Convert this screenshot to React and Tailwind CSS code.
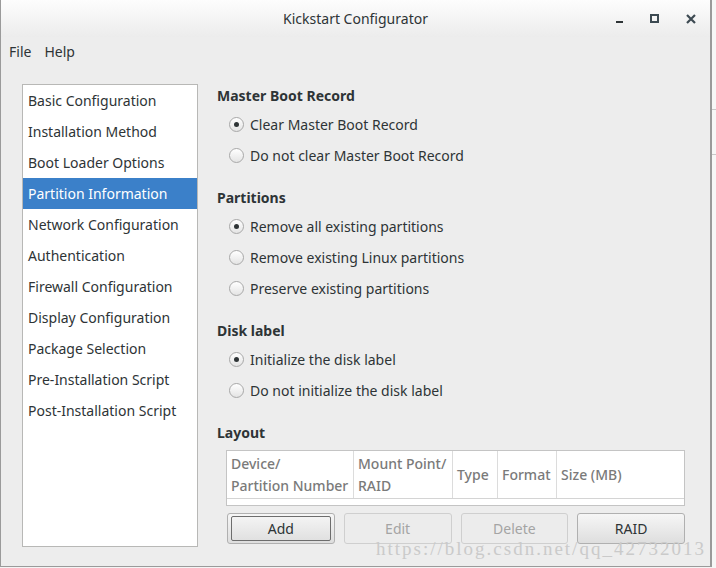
import React from 'react';

const sections = [
  'Basic Configuration',
  'Installation Method',
  'Boot Loader Options',
  'Partition Information',
  'Network Configuration',
  'Authentication',
  'Firewall Configuration',
  'Display Configuration',
  'Package Selection',
  'Pre-Installation Script',
  'Post-Installation Script',
];

const Radio = ({ checked, label }) => (
  <div className="flex h-[31px] items-center pl-[12px]">
    <span className="flex h-[15px] w-[15px] items-center justify-center rounded-full border border-[#a8a8a8] bg-gradient-to-b from-[#ffffff] to-[#e4e4e4]">
      {checked && <span className="h-[5px] w-[5px] rounded-full bg-[#2e3436]" />}
    </span>
    <span className="ml-[6px] text-[#2e3436]">{label}</span>
  </div>
);

const Heading = ({ children, className = '' }) => (
  <div className={`flex h-[24px] items-center font-bold text-[#2e3436] ${className}`}>{children}</div>
);

const Button = ({ children, disabled, focused }) => (
  <div
    className={`flex h-[31px] items-center justify-center rounded-[3px] border ${
      disabled
        ? 'border-[#cfcfcf] bg-[#ececec] text-[#a4a4a4]'
        : 'border-[#b0b0b0] bg-gradient-to-b from-[#f6f6f6] to-[#dedede] text-[#2e3436]'
    }`}
  >
    <div
      className={`flex h-[25px] w-[calc(100%-6px)] items-center justify-center rounded-[2px] ${
        focused ? 'border border-[#6d6d6d]' : ''
      }`}
    >
      {children}
    </div>
  </div>
);

export default function App() {
  return (
    <div className="flex h-[568px] w-[716px] overflow-hidden bg-[#f4f4f4] text-[14px]" style={{ fontFamily: '"Noto Sans", sans-serif' }}>
      <div className="relative flex h-[567px] w-[712px] flex-col border-l border-r-2 border-b border-[#9a9a9a] bg-[#ededed]">
        {/* title bar */}
        <div className="relative flex h-[37px] items-center justify-center bg-gradient-to-b from-[#fdfdfd] to-[#ececec]">
          <span className="text-[14px] text-[#2e3436]">Kickstart Configurator</span>
          <div className="absolute right-[14px] top-0 flex h-full items-center gap-[27px]">
            <span className="mt-[7px] h-[2px] w-[7px] bg-[#2e3436]" />
            <span className="h-[9px] w-[9px] border-2 border-[#3d4a52]" />
            <svg width="10" height="10" viewBox="0 0 10 10">
              <path d="M1 1 L9 9 M9 1 L1 9" stroke="#3d4a52" strokeWidth="2.2" />
            </svg>
          </div>
        </div>

        {/* menu bar */}
        <div className="flex h-[29px] items-center gap-[13px] pl-[8px] text-[14px] text-[#2e3436]">
          <span>File</span>
          <span>Help</span>
        </div>

        <div className="flex pl-[21px] pt-[17px]">
          {/* sidebar */}
          <div className="mt-[1px] h-[463px] w-[176px] border border-[#b8b8b6] bg-white">
            {sections.map((s) => (
              <div
                key={s}
                className={`flex h-[31px] items-center pl-[5px] ${
                  s === 'Partition Information' ? 'bg-[#3b80c9] text-white' : 'text-[#2e3436]'
                }`}
              >
                {s}
              </div>
            ))}
          </div>

          {/* right pane */}
          <div className="ml-[19px] flex w-[468px] flex-col">
            <Heading>Master Boot Record</Heading>
            <div className="mt-[2px]">
              <Radio checked label="Clear Master Boot Record" />
              <Radio label="Do not clear Master Boot Record" />
            </div>

            <Heading className="mt-[14px]">Partitions</Heading>
            <div className="mt-[2px]">
              <Radio checked label="Remove all existing partitions" />
              <Radio label="Remove existing Linux partitions" />
              <Radio label="Preserve existing partitions" />
            </div>

            <Heading className="mt-[14px]">Disk label</Heading>
            <div className="mt-[2px]">
              <Radio checked label="Initialize the disk label" />
              <Radio label="Do not initialize the disk label" />
            </div>

            <Heading className="mt-[14px]">Layout</Heading>

            <div className="ml-[9px] mt-[6px] w-[459px]">
              <div className="h-[56px] border border-[#c4c4c4] bg-white">
                <div className="flex h-[48px] border-b border-[#d4d4d4] font-medium leading-[22px] text-[#7a7a7a]">
                  <div className="flex w-[127px] flex-col justify-center border-r border-[#dcdcdc] pl-[4px]">
                    <span>Device/</span>
                    <span>Partition Number</span>
                  </div>
                  <div className="flex w-[99px] flex-col justify-center border-r border-[#dcdcdc] pl-[4px]">
                    <span>Mount Point/</span>
                    <span>RAID</span>
                  </div>
                  <div className="flex w-[45px] items-center border-r border-[#dcdcdc] pl-[4px]">Type</div>
                  <div className="flex w-[59px] items-center border-r border-[#dcdcdc] pl-[4px]">Format</div>
                  <div className="flex flex-1 items-center pl-[4px]">Size (MB)</div>
                </div>
              </div>

              <div className="mt-[7px] grid grid-cols-4 gap-[9px] pl-[1px]">
                <Button focused>Add</Button>
                <Button disabled>Edit</Button>
                <Button disabled>Delete</Button>
                <Button>RAID</Button>
              </div>
            </div>
          </div>
        </div>

        {/* watermark */}
        <div
          className="pointer-events-none absolute left-[375px] top-[535px] text-[19px] tracking-[2px] text-[#cacaca]"
          style={{ fontFamily: '"Liberation Serif", serif' }}
        >
          https://blog.csdn.net/qq_42732013
        </div>
      </div>

      {/* background behind window */}
      <div className="flex flex-1 flex-col bg-[#f7f7f7]">
        <div className="h-[110px] border-b border-[#c8c8c8]" />
        <div className="h-[45px] border-b border-[#c8c8c8]" />
      </div>
    </div>
  );
}
